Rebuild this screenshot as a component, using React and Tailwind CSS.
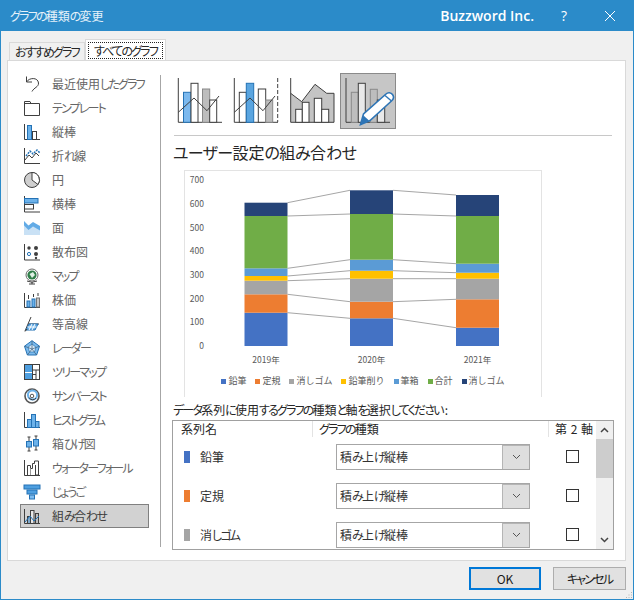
import React from "react";

const INK = "#3f3f3f";
const BLUE = "#6cb2ea";
const BLUE_D = "#2472b5";

function J({ children, t = "tracking-[-1.8px]" }) {
  const parts = String(children).split(/([ぁ-んァ-ヶー]+)/);
  return (
    <>
      {parts.map((p, i) =>
        i % 2 === 1 ? (
          <span key={i} className={t}>{p}</span>
        ) : (
          <React.Fragment key={i}>{p}</React.Fragment>
        )
      )}
    </>
  );
}

function Ax() {
  return <path d="M.5 0V15.5H16" fill="none" stroke={INK} />;
}

const icons = [
  <g fill="none" stroke={INK}>
    <path d="M2.5 6C5 1.5 14 1 14.5 7C14.8 11 10 11.5 8 15.5" />
    <path d="M2.5 .5V6H8" />
  </g>,
  <g fill="none" stroke={INK}>
    <path d="M.5 3.5H15.5V15.5H.5V1.5H6L7 3.5" />
  </g>,
  <g>
    <Ax />
    <rect x="3.5" y="1.5" width="4" height="14" fill={BLUE} stroke={BLUE_D} />
    <rect x="8.5" y="7.5" width="4" height="8" fill="#fff" stroke={INK} />
  </g>,
  <g fill="none">
    <Ax />
    <path d="M1 12L5 7L8 10L12 5L15 8" stroke={INK} />
    <path d="M2 8L6 3L9 6L13 2L16 5" stroke={BLUE_D} strokeWidth="1.5" strokeDasharray="2 1" />
  </g>,
  <g>
    <circle cx="8" cy="8" r="7.5" fill="#cfcfcf" stroke={INK} />
    <path d="M8 8V.5A7.5 7.5 0 0 1 14 12.5Z" fill="#fff" stroke={INK} />
  </g>,
  <g>
    <path d="M.5 0V16H16" fill="none" stroke={INK} />
    <rect x=".5" y="2.5" width="13.5" height="4.5" fill={BLUE} stroke={BLUE_D} />
    <rect x=".5" y="8.5" width="9" height="4.5" fill="#fff" stroke={INK} />
  </g>,
  <g>
    <path d="M0 5L4.5 9.5L9 6L16 10V15H0Z" fill="#c9e1f5" />
    <path d="M0 1L4.5 5.5L9 2L16 6V10.5L9 6.5L4.5 10L0 5.5Z" fill="#62abe6" />
  </g>,
  <g>
    <path d="M.5 0V16H16" fill="none" stroke={INK} />
    <circle cx="5" cy="4" r="1.7" fill={INK} />
    <circle cx="12" cy="4" r="2" fill={INK} />
    <circle cx="5" cy="10" r="1.6" fill="#fff" stroke={BLUE_D} />
    <circle cx="12" cy="10" r="2" fill={INK} />
    <circle cx="12" cy="14" r="1.2" fill={INK} />
  </g>,
  <g fill="none">
    <circle cx="8" cy="7" r="6" stroke="#6a6a6a" />
    <circle cx="8" cy="7" r="4.6" fill="#2f7d48" />
    <path d="M5.5 6L9 4L11 7L8 10Z" fill="#dff0e4" />
    <path d="M3 13Q8 15.5 13 13M8 14V16M5 16H11" stroke={INK} />
  </g>,
  <g fill="none">
    <path d="M.5 1V15.5H16" stroke={INK} />
    <rect x="3" y="9" width="3" height="6" fill={BLUE} stroke={BLUE_D} />
    <rect x="8" y="7" width="3" height="8" fill={BLUE} stroke={BLUE_D} />
    <rect x="12.5" y="6" width="3" height="9" fill="#c6c6c6" stroke="#777" />
    <path d="M4.5 3V7M9.5 2V5M14 1V4" stroke={INK} />
  </g>,
  <g fill="none">
    <path d="M4 8L7 1M1 15L4 8M4 8H15" stroke={INK} />
    <path d="M5 8H14L11 14H2Z" fill={BLUE} stroke={BLUE_D} />
    <path d="M8 8L5 14M11 8L8 14M3.5 11H12.5" stroke="#fff" />
    <path d="M1 15.5L3 13" stroke={INK} />
  </g>,
  <g>
    <path d="M8 .7L15.5 6.2L12.6 15H3.4L.5 6.2Z" fill="#7cbaec" stroke={BLUE_D} />
    <path d="M8 4L12 7.2L10.5 12H5.5L4 7.2Z" fill="#d6e9f8" stroke={BLUE_D} strokeWidth=".7" />
    <path d="M8 .7V9M.5 6.2L8 9M15.5 6.2L8 9M3.4 15L8 9M12.6 15L8 9" fill="none" stroke="#3f5f7a" strokeWidth=".7" />
  </g>,
  <g>
    <rect x=".5" y=".5" width="15" height="15" fill="#fff" stroke={INK} />
    <rect x="1" y="1" width="7" height="7" fill="#4e9fe0" />
    <rect x="1" y="9" width="7" height="6" fill="#4e9fe0" />
    <path d="M8.5 1V15M9 6H15M12 6V15M9 10.5H12" stroke={INK} fill="none" />
  </g>,
  <g fill="none">
    <circle cx="8" cy="8" r="7" stroke="#555" strokeWidth="1.6" />
    <circle cx="8.5" cy="7" r="4.6" stroke={BLUE} strokeWidth="2" />
    <path d="M5 9.5A4 4 0 0 0 12 10" stroke={INK} />
    <circle cx="8" cy="8" r="1.8" stroke="#555" />
  </g>,
  <g>
    <Ax />
    <rect x="3.5" y="7.5" width="4" height="8" fill={BLUE} stroke={BLUE_D} />
    <rect x="7.5" y="2.5" width="4" height="13" fill={BLUE} stroke={BLUE_D} />
    <rect x="11.5" y="9.5" width="3.5" height="6" fill={BLUE} stroke={BLUE_D} />
  </g>,
  <g fill="none">
    <path d="M5 1V5M5 11V15M3.5 1H6.5M3.5 15H6.5M12 0V3M12 10V14M10.5 0H13.5M10.5 14H13.5" stroke={INK} />
    <rect x="2.5" y="5.5" width="5" height="5.5" fill={BLUE} stroke={BLUE_D} />
    <rect x="9.5" y="3.5" width="5" height="6.5" fill={BLUE} stroke={BLUE_D} />
  </g>,
  <g fill="none" stroke={INK}>
    <path d="M.5 0V15.5H16" />
    <path d="M3.5 15V5.5H6.5V8.5H8.5V3.5H10.5V1H14.5V15H11.5V5" />
    <path d="M6.5 8.5V15" stroke="#999" />
  </g>,
  <g>
    <rect x="0" y="1" width="16" height="4" fill="#4e9fe0" stroke={BLUE_D} />
    <rect x="3" y="6" width="10" height="4" fill="#4e9fe0" stroke={BLUE_D} />
    <rect x="5.5" y="11" width="5" height="4" fill="#7dbcf0" stroke={BLUE_D} />
  </g>,
  <g fill="none">
    <path d="M.5 1V15.5H16" stroke={INK} />
    <rect x="3.5" y="8.5" width="3" height="7" fill="#7fa8c9" stroke={INK} />
    <rect x="6.5" y="2.5" width="3.5" height="13" fill="#e8e8e8" stroke={INK} />
    <rect x="11.5" y="5.5" width="3" height="10" fill="#bdbdbd" stroke={INK} />
    <path d="M1 14L6 8L10 13L15 8" stroke={BLUE_D} />
  </g>,
];

const labels = [
  "最近使用したグラフ", "テンプレート", "縦棒", "折れ線", "円", "横棒", "面", "散布図", "マップ", "株価",
  "等高線", "レーダー", "ツリーマップ", "サンバースト", "ヒストグラム", "箱ひげ図", "ウォーターフォール", "じょうご", "組み合わせ",
];

function Typed({ children, selected }) {
  return (
    <button
      type="button"
      className={
        selected
          ? "w-[56px] h-[56px] shrink-0 bg-[#c6c6c6] border border-[#8a8a8a]"
          : "w-[56px] h-[56px] shrink-0 border border-transparent"
      }
    >
      <svg width="54" height="54" viewBox="1 1 54 54" className="block">
        {children}
      </svg>
    </button>
  );
}

const ZIG = "M6.3 39.3L22 25L35 37.7L47 23";

function Pencil() {
  return (
    <g>
      <path d="M20.5 51.5L23.5 41L46 21C48 19 51 19.5 52.5 21.5C54 23.5 53.5 26 52 27.5L30 47.5Z" fill="#fff" stroke="#2e75b6" strokeWidth="1.6" />
      <path d="M20.5 51.5L23.5 42.5L29 47.5Z" fill="#2e75b6" />
      <path d="M45 22.5L51.5 28" stroke="#2e75b6" strokeWidth="1.4" />
    </g>
  );
}

const colors = ["#4472c4", "#ed7d31", "#a5a5a5", "#ffc000", "#5b9bd5", "#70ad47", "#264478"];
const legend = ["鉛筆", "定規", "消しゴム", "鉛筆削り", "筆箱", "合計", "消しゴム"];
const stacks = [
  { x: 59.5, label: "2019年", y: [175, 141.7, 123.3, 109.7, 105, 97.3, 45, 31.7] },
  { x: 165, label: "2020年", y: [175, 147.3, 130.7, 107.7, 99.7, 88.7, 43, 19.3] },
  { x: 271, label: "2021年", y: [175, 156.7, 128.3, 107.7, 101.7, 92.7, 45, 24] },
];
const BAR = 43;

function Chart() {
  return (
    <div className="ml-[12px] w-[358px] h-[227px] bg-white border-t border-l border-r border-[#e3e3e3] flex flex-col [font-feature-settings:normal]">
      <svg width="356" height="198" viewBox="0 0 356 198" className="block shrink-0">
        {[0, 1, 2, 3, 4, 5, 6, 7].map((i) => (
          <text key={i} x="19" y={178 - i * 23.7} textAnchor="end" fontSize="8.5" fill="#595959">
            {i * 100}
          </text>
        ))}
        {[0, 1].map((s) =>
          stacks[s].y.slice(1).map((y, i) => (
            <line key={`${s}-${i}`} x1={stacks[s].x + BAR} y1={y} x2={stacks[s + 1].x} y2={stacks[s + 1].y[i + 1]} stroke="#a6a6a6" strokeWidth="1" />
          ))
        )}
        {stacks.map((s) => (
          <g key={s.label}>
            {colors.map((c, i) => (
              <rect key={c} x={s.x} y={s.y[i + 1]} width={BAR} height={s.y[i] - s.y[i + 1]} fill={c} />
            ))}
            <text x={s.x + BAR / 2} y="192" textAnchor="middle" fontSize="8.5" fill="#595959">
              {s.label}
            </text>
          </g>
        ))}
      </svg>
      <div className="flex justify-center items-center gap-[9px] mt-[6px] text-[9px] leading-[12px] text-[#595959]">
        {legend.map((l, i) => (
          <div key={i} className="flex items-center gap-[2px]">
            <span className="w-[5px] h-[5px] inline-block" style={{ background: colors[i] }} />
            <span>{l}</span>
          </div>
        ))}
      </div>
    </div>
  );
}

function Row({ name, color }) {
  return (
    <div className="grid grid-cols-[140px_236px_47px] h-[39px] items-center shrink-0">
      <div className="flex items-center pl-[11px] gap-[10px] text-[12px] text-[#333]">
        <span className="w-[6px] h-[12px] block" style={{ background: color }} />
        <span><J>{name}</J></span>
      </div>
      <div className="pl-[23px]">
        <div className="w-[194px] h-[26px] flex bg-white border border-[#a6a6a6]">
          <span className="flex-1 pl-[3px] text-[12px] leading-[24px] text-[#333]"><J>積み上げ縦棒</J></span>
          <span className="w-[27px] bg-[#dedede] border-l border-t border-[#b5b5b5] flex items-center justify-center">
            <svg width="9" height="6" viewBox="0 0 9 6"><path d="M1 1L4.5 4.5L8 1" fill="none" stroke="#555" /></svg>
          </span>
        </div>
      </div>
      <div className="flex justify-center">
        <span className="w-[13px] h-[13px] block bg-white border border-[#333]" />
      </div>
    </div>
  );
}

function Table() {
  return (
    <div className="w-[442px] h-[130px] border border-[#a0a0a0] bg-white flex overflow-hidden">
      <div className="w-[423px] flex flex-col overflow-hidden">
        <div className="grid grid-cols-[140px_236px_47px] h-[16px] shrink-0 text-[12px] leading-[16px] text-[#262626]">
          <span className="pl-[8px] border-r border-[#e3e3e3]">系列名</span>
          <span className="pl-[6px] border-r border-[#e3e3e3]"><J>グラフの種類</J></span>
          <span className="pl-[6px] whitespace-nowrap tracking-[0.5px]">第 2 軸</span>
        </div>
        <Row name="鉛筆" color="#4472c4" />
        <Row name="定規" color="#ed7d31" />
        <Row name="消しゴム" color="#a5a5a5" />
      </div>
      <div className="w-[17px] bg-[#f0f0f0] flex flex-col items-stretch">
        <div className="h-[18px] flex items-center justify-center">
          <svg width="9" height="6" viewBox="0 0 9 6"><path d="M1 5L4.5 1.5L8 5" fill="none" stroke="#444" strokeWidth="1.5" /></svg>
        </div>
        <div className="h-[39px] bg-[#cdcdcd]" />
        <div className="flex-1" />
        <div className="h-[18px] flex items-center justify-center">
          <svg width="9" height="6" viewBox="0 0 9 6"><path d="M1 1L4.5 4.5L8 1" fill="none" stroke="#444" strokeWidth="1.5" /></svg>
        </div>
      </div>
    </div>
  );
}

export default function App() {
  return (
    <div className="relative w-[634px] h-[600px] bg-[#f0f0f0] border-x border-b border-[#2b8bc9] flex flex-col overflow-hidden font-['Noto_Sans_CJK_JP','Liberation_Sans',sans-serif] [font-feature-settings:'palt']">
      <header className="h-[31px] shrink-0 bg-[#2b8bc9] flex items-center text-white">
        <span className="ml-[9px] text-[12px] text-[#e6f2fa]"><J>グラフの種類の変更</J></span>
        <span className="ml-auto font-['Open_Sans',sans-serif] text-[14px] font-semibold">Buzzword Inc.</span>
        <span className="ml-[27px] w-[8px] font-['Open_Sans',sans-serif] text-[14px]">?</span>
        <svg width="12" height="12" viewBox="0 0 12 12" className="ml-[35px] mr-[17px]">
          <path d="M1 1L11 11M11 1L1 11" stroke="#fff" strokeWidth="1" fill="none" />
        </svg>
      </header>

      <div className="h-[29px] shrink-0 flex items-end pl-[8px]">
        <div className="w-[76px] h-[18px] border border-b-0 border-[#d9d9d9] bg-[#f0f0f0] text-[12px] leading-[18px] text-center text-[#262626] whitespace-nowrap"><J>おすすめグラフ</J></div>
        <div className="w-[81px] h-[21px] border border-b-0 border-[#d9d9d9] bg-white p-[2px]">
          <div className="h-[17px] border border-dotted border-[#222] text-[12px] leading-[15px] text-center text-[#262626] whitespace-nowrap"><J>すべてのグラフ</J></div>
        </div>
      </div>

      <main className="ml-[6px] w-[619px] h-[501px] shrink-0 bg-white border border-[#d9d9d9] flex">
        <nav className="w-[152px] shrink-0 pl-[12px] pt-[11px] flex flex-col">
          {labels.map((l, i) => {
            const sel = i === labels.length - 1;
            return (
              <div
                key={l}
                className={
                  sel
                    ? "w-[129px] h-[24px] shrink-0 pl-[3px] flex items-center gap-[12px] border border-[#808080] bg-[#d2d2d2] text-[12px] text-[#404040]"
                    : "w-[129px] h-[24px] shrink-0 pl-[3px] flex items-center gap-[12px] border border-transparent text-[12px] text-[#666]"
                }
              >
                <svg width="16" height="16" viewBox="0 0 16 16" className="shrink-0 overflow-visible">
                  {icons[i]}
                </svg>
                <span className="whitespace-nowrap"><J>{l}</J></span>
              </div>
            );
          })}
        </nav>
        <div className="w-px h-[472px] mt-[14px] bg-[#a6a6a6] shrink-0" />
        <section className="ml-[11px] pt-[12px] w-[442px] flex flex-col">
          <div className="flex">
            <Typed>
              <path d="M6.3 5V49.3H50" fill="none" stroke={INK} />
              <rect x="11.5" y="19.3" width="7.5" height="30" fill="#7cb9ee" stroke={BLUE_D} />
              <rect x="19" y="10.3" width="7" height="39" fill="#fff" stroke={INK} />
              <rect x="30.5" y="16" width="7.2" height="33.3" fill="#bdbdbd" stroke="#888" />
              <rect x="37.7" y="27" width="7" height="22.3" fill="#fff" stroke={INK} />
              <path d={ZIG} fill="none" stroke={INK} />
            </Typed>
            <Typed>
              <path d="M6.3 5V49.3H50" fill="none" stroke={INK} />
              <path d="M49.7 5V49" fill="none" stroke={INK} strokeDasharray="4 2" />
              <rect x="11.3" y="19.3" width="7" height="30" fill="#fff" stroke={INK} />
              <rect x="18.3" y="10.3" width="7.4" height="39" fill="#5aa5e0" stroke={BLUE_D} />
              <rect x="30.3" y="16" width="7.4" height="33.3" fill="#fff" stroke={INK} />
              <rect x="37.7" y="27" width="7" height="22.3" fill="#bdbdbd" stroke="#888" />
              <path d={ZIG} fill="none" stroke={INK} />
            </Typed>
            <Typed>
              <path d="M6.7 20.3L17.7 28.7L31 11.3L42.7 20.3H50V49.3H6.7Z" fill="#c4c4c4" />
              <path d="M6.7 20.3L17.7 28.7L31 11.3L42.7 20.3H50V49.3" fill="none" stroke={INK} />
              <path d="M6.7 5V49.3H50" fill="none" stroke={INK} />
              <rect x="11.7" y="36.3" width="6.6" height="13" fill="#fff" stroke={INK} />
              <rect x="18.3" y="29.3" width="6.7" height="20" fill="#fff" stroke={INK} />
              <rect x="30.3" y="25.3" width="7.4" height="24" fill="#fff" stroke={INK} />
              <rect x="37.7" y="36.3" width="7" height="13" fill="#fff" stroke={INK} />
            </Typed>
            <Typed selected>
              <path d="M6 5V49.3H50" fill="none" stroke={INK} />
              <rect x="11.3" y="19.3" width="7" height="30" fill="#bdbdbd" stroke="#8a8a8a" />
              <rect x="18.3" y="10.3" width="7" height="39" fill="#e9e9e9" stroke={INK} />
              <rect x="30.3" y="16.3" width="7" height="33" fill="#bdbdbd" stroke="#8a8a8a" />
              <rect x="37.3" y="27" width="7.4" height="22.3" fill="#e9e9e9" stroke={INK} />
              <Pencil />
            </Typed>
          </div>
          <div className="mt-[6px] ml-[2px] w-[438px] h-px bg-[#c8c8c8]" />
          <h2 className="mt-[3px] h-[31px] text-[16px] leading-[26px] font-normal text-[#262626] ml-px whitespace-nowrap"><J t="tracking-[-0.7px]">ユーザー設定の組み合わせ</J></h2>
          <Chart />
          <p className="mt-[3px] h-[20px] ml-px text-[12px] leading-[20px] text-[#262626] whitespace-nowrap"><J>データ系列に使用するグラフの種類と軸を選択してください</J><span className="ml-[2px]">:</span></p>
          <Table />
        </section>
      </main>

      <footer className="flex justify-end gap-[12px] pt-[6px] pr-[7px]">
        <button type="button" className="w-[72px] h-[23px] border-2 border-[#0078d7] bg-[#e1e1e1] text-[12px] text-[#1a1a1a]">OK</button>
        <button type="button" className="w-[73px] h-[23px] border border-[#adadad] bg-[#e1e1e1] text-[12px] text-[#1a1a1a]"><J>キャンセル</J></button>
      </footer>

      <svg width="8" height="8" viewBox="0 0 8 8" className="absolute right-0 bottom-0">
        <path d="M6 1h1v1H6zM6 3.5h1v1H6zM3.5 3.5h1v1h-1zM6 6h1v1H6zM3.5 6h1v1h-1zM1 6h1v1H1z" fill="#b5b5b5" />
      </svg>
    </div>
  );
}
